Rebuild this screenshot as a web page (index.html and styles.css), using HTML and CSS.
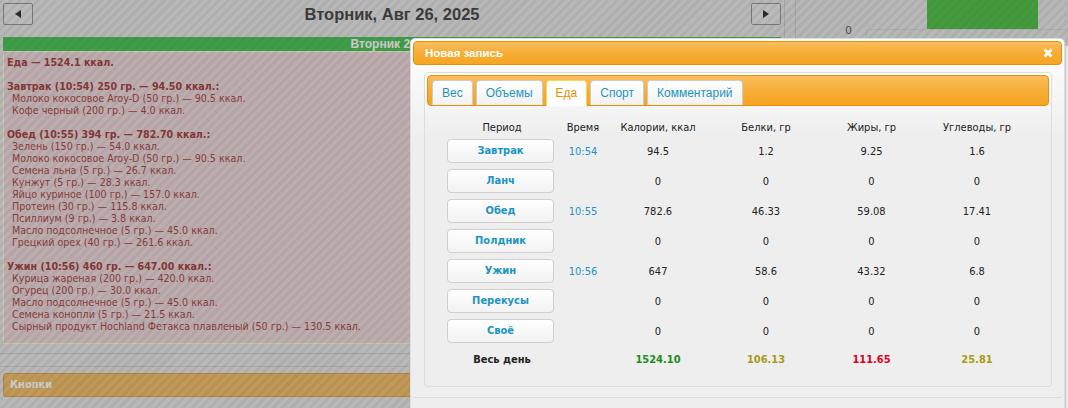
FILE: index.html
```html
<!DOCTYPE html>
<html lang="ru">
<head>
<meta charset="utf-8">
<title>Дневник</title>
<link rel="stylesheet" href="styles.css">
</head>
<body>
<div class="page">
  <div class="left">
    <div class="nav">
      <div class="navbtn"><svg width="8" height="8" viewBox="0 0 8 8"><polygon points="7,0 7,8 1,4" fill="#222"/></svg></div>
      <div class="title">Вторник, Авг 26, 2025</div>
      <div class="navbtn"><svg width="8" height="8" viewBox="0 0 8 8"><polygon points="1,0 1,8 7,4" fill="#222"/></svg></div>
    </div>
    <div class="day">
      <div class="day-head">Вторник 26.08</div>
      <div class="day-body">
        <div class="ln hd">Еда — 1524.1 ккал.</div>
        <div class="ln"></div>
        <div class="ln hd">Завтрак (10:54) 250 гр. — 94.50 ккал.:</div>
        <div class="ln it">Молоко кокосовое Aroy-D (50 гр.) — 90.5 ккал.</div>
        <div class="ln it">Кофе черный (200 гр.) — 4.0 ккал.</div>
        <div class="ln"></div>
        <div class="ln hd">Обед (10:55) 394 гр. — 782.70 ккал.:</div>
        <div class="ln it">Зелень (150 гр.) — 54.0 ккал.</div>
        <div class="ln it">Молоко кокосовое Aroy-D (50 гр.) — 90.5 ккал.</div>
        <div class="ln it">Семена льна (5 гр.) — 26.7 ккал.</div>
        <div class="ln it">Кунжут (5 гр.) — 28.3 ккал.</div>
        <div class="ln it">Яйцо куриное (100 гр.) — 157.0 ккал.</div>
        <div class="ln it">Протеин (30 гр.) — 115.8 ккал.</div>
        <div class="ln it">Псиллиум (9 гр.) — 3.8 ккал.</div>
        <div class="ln it">Масло подсолнечное (5 гр.) — 45.0 ккал.</div>
        <div class="ln it">Грецкий орех (40 гр.) — 261.6 ккал.</div>
        <div class="ln"></div>
        <div class="ln hd">Ужин (10:56) 460 гр. — 647.00 ккал.:</div>
        <div class="ln it">Курица жареная (200 гр.) — 420.0 ккал.</div>
        <div class="ln it">Огурец (200 гр.) — 30.0 ккал.</div>
        <div class="ln it">Масло подсолнечное (5 гр.) — 45.0 ккал.</div>
        <div class="ln it">Семена конопли (5 гр.) — 21.5 ккал.</div>
        <div class="ln it">Сырный продукт Hochland Фетакса плавленый (50 гр.) — 130.5 ккал.</div>
      </div>
    </div>
    <div class="sep"></div>
    <div class="btnbar">Кнопки</div>
  </div>
  <div class="right">
    <div class="chart">
      <div class="bar"></div>
      <div class="axis-label">0</div>
      <div class="plot"></div>
    </div>
  </div>
</div>

<div class="overlay"></div>

<div class="dialog">
  <div class="dlg-title">
    <span>Новая запись</span>
    <svg class="close" width="10" height="10" viewBox="0 0 10 10"><path d="M1.5 1.5 L8.5 8.5 M8.5 1.5 L1.5 8.5" stroke="#fff" stroke-width="2.6"/></svg>
  </div>
  <div class="dlg-content">
    <div class="tabs">
      <div class="tabnav">
        <div class="tab">Вес</div>
        <div class="tab">Объемы</div>
        <div class="tab active">Еда</div>
        <div class="tab">Спорт</div>
        <div class="tab">Комментарий</div>
      </div>
      <div class="panel">
        <div class="grid head">
          <div>Период</div><div>Время</div><div>Калории, ккал</div><div>Белки, гр</div><div>Жиры, гр</div><div>Углеводы, гр</div>
        </div>
        <div class="rows">
          <div class="grid row"><div class="pbtn">Завтрак</div><div class="time">10:54</div><div>94.5</div><div>1.2</div><div>9.25</div><div>1.6</div></div>
          <div class="grid row"><div class="pbtn">Ланч</div><div class="time"></div><div>0</div><div>0</div><div>0</div><div>0</div></div>
          <div class="grid row"><div class="pbtn">Обед</div><div class="time">10:55</div><div>782.6</div><div>46.33</div><div>59.08</div><div>17.41</div></div>
          <div class="grid row"><div class="pbtn">Полдник</div><div class="time"></div><div>0</div><div>0</div><div>0</div><div>0</div></div>
          <div class="grid row"><div class="pbtn">Ужин</div><div class="time">10:56</div><div>647</div><div>58.6</div><div>43.32</div><div>6.8</div></div>
          <div class="grid row"><div class="pbtn">Перекусы</div><div class="time"></div><div>0</div><div>0</div><div>0</div><div>0</div></div>
          <div class="grid row"><div class="pbtn">Своё</div><div class="time"></div><div>0</div><div>0</div><div>0</div><div>0</div></div>
          <div class="grid total"><div class="tl">Весь день</div><div></div><div class="g">1524.10</div><div class="o">106.13</div><div class="r">111.65</div><div class="o">25.81</div></div>
        </div>
      </div>
    </div>
  </div>
  <div class="btnpane"></div>
</div>
<div class="edge"></div>
</body>
</html>
```

FILE: styles.css
```css
html, body {
  margin: 0;
  padding: 0;
}
body {
  width: 1068px;
  height: 408px;
  overflow: hidden;
  background: #e3e3e3;
  font-family: "DejaVu Sans", sans-serif;
  position: relative;
}

/* ---------- background page ---------- */
.page {
  display: flex;
  height: 408px;
}
.left {
  width: 785px;
  box-sizing: border-box;
  border-right: 1px solid #cbcbcb;
  padding: 3px 3px 0 3px;
}
.nav {
  display: flex;
  align-items: center;
  justify-content: space-between;
  height: 22px;
}
.navbtn {
  width: 30px;
  height: 22px;
  box-sizing: border-box;
  border: 1px solid #8e8e8e;
  border-radius: 2px;
  background: #e6e6e6;
  display: flex;
  align-items: center;
  justify-content: center;
}
.title {
  font-family: "Liberation Sans", Arial, sans-serif;
  font-weight: bold;
  font-size: 16.5px;
  color: #3a3a3a;
}
.day {
  margin-top: 12px;
}
.day-head {
  height: 14px;
  background: #3fbf4c;
  color: #fff;
  font-family: "Liberation Sans", Arial, sans-serif;
  font-weight: bold;
  font-size: 12px;
  line-height: 14px;
  text-align: center;
}
.day-body {
  background: #ebd4d6;
  border: 1px solid #fbfad0;
  height: 293px;
  box-sizing: border-box;
  padding: 4px 3px 0 3px;
  color: #a23c3c;
  font-family: "DejaVu Sans", sans-serif;
  font-stretch: condensed;
  font-size: 10.6px;
}
.ln {
  height: 12px;
  line-height: 12px;
  white-space: nowrap;
}
.ln.hd {
  font-weight: bold;
  color: #9e3434;
}
.ln.it {
  padding-left: 5px;
}
.sep {
  margin: 9px -3px 0;
  height: 12px;
  border-top: 1px solid #c9c9c9;
  border-bottom: 1px solid #cfcfcf;
}
.btnbar {
  margin-top: 6px;
  height: 24px;
  box-sizing: border-box;
  border: 1px solid #dd9c3c;
  border-radius: 3px;
  background: #f0b95f;
  color: #fff;
  font-family: "DejaVu Sans", sans-serif;
  font-stretch: condensed;
  font-weight: bold;
  font-size: 11px;
  line-height: 22px;
  padding-left: 6px;
}
.right {
  margin-left: 10px;
  flex: 1;
  border-left: 1px solid #cbcbcb;
}
.chart {
  position: relative;
  height: 408px;
}
.bar {
  position: absolute;
  left: 131px;
  top: 0;
  width: 111px;
  height: 29px;
  background: #47bd3d;
}
.axis-label {
  position: absolute;
  left: 49px;
  top: 24px;
  font-family: "DejaVu Sans", sans-serif;
  font-size: 11px;
  color: #555;
}
.plot {
  position: absolute;
  left: 70px;
  top: 29px;
  right: -10px;
  height: 400px;
  border: 1px solid #d4d4e0;
}

/* ---------- overlay ---------- */
.overlay {
  position: absolute;
  inset: 0;
  background: repeating-linear-gradient(135deg,
    rgba(60, 60, 60, 0.31) 0 3.2px,
    rgba(60, 60, 60, 0.26) 3.2px 6.4px);
}

/* ---------- dialog ---------- */
.dialog {
  position: absolute;
  left: 410px;
  top: 38px;
  width: 655px;
  height: 400px;
  box-sizing: border-box;
  border: 1px solid #dedede;
  border-radius: 5px;
  padding: 2px;
  background: linear-gradient(#ffffff, #eeeeee 100px);
  font-family: "DejaVu Sans", sans-serif;
  font-stretch: condensed;
  font-size: 11px;
}
.edge {
  position: absolute;
  left: 1065px;
  top: 46px;
  right: 0;
  bottom: 0;
  border-left: 1px solid #c6c6c6;
  background: #e9e9e9;
}
.dlg-title {
  height: 24px;
  box-sizing: border-box;
  border: 1px solid #e78f08;
  border-radius: 4px;
  background: linear-gradient(#f8bd5c, #f6aa30 60%, #f5a623);
  color: #fff;
  font-family: "Liberation Sans", Arial, sans-serif;
  font-weight: bold;
  font-size: 11.5px;
  display: flex;
  align-items: center;
  justify-content: space-between;
  padding: 0 8px 0 11px;
}
.close {
  display: block;
}
.dlg-content {
  padding: 7px 10px 0 11px;
}
.tabs {
  height: 315px;
  box-sizing: border-box;
  border: 1px solid #dddddd;
  border-radius: 4px;
  padding: 2px;
  background: linear-gradient(#ffffff, #eeeeee 60px);
}
.tabnav {
  height: 31px;
  box-sizing: border-box;
  border: 1px solid #e78f08;
  border-radius: 4px;
  background: linear-gradient(#f8be5e, #f6aa30 60%, #f5a525);
  padding: 4px 4px 0;
  display: flex;
  align-items: flex-start;
}
.tab {
  height: 25px;
  box-sizing: border-box;
  border: 1px solid #cccccc;
  border-bottom: 0;
  border-radius: 4px 4px 0 0;
  background: linear-gradient(#ffffff, #f1f1f1);
  color: #1c94c4;
  font-family: "Liberation Sans", Arial, sans-serif;
  font-size: 12px;
  line-height: 25px;
  padding: 0 9px;
  margin-right: 3px;
}
.tab.active {
  height: 26px;
  background: #ffffff;
  border-color: #fbd850;
  color: #eb8f00;
  position: relative;
}
.panel {
  padding: 9px 0 0 15px;
}
.grid {
  display: grid;
  grid-template-columns: 120px 42px 108px 108px 103px 108px;
  align-items: center;
  justify-items: center;
  color: #222;
}
.head {
  height: 24px;
}
.rows {
  display: flex;
  flex-direction: column;
  gap: 6px;
}
.row {
  height: 24px;
}
.pbtn {
  justify-self: start;
  margin-left: 5px;
  width: 107px;
  height: 24px;
  box-sizing: border-box;
  border: 1px solid #cfcfcf;
  border-radius: 4px;
  background: linear-gradient(#ffffff, #f2f2f2);
  color: #1c94c4;
  font-weight: bold;
  text-align: center;
  line-height: 22px;
}
.time {
  color: #1c94c4;
}
.total {
  height: 20px;
  font-weight: bold;
}
.total .tl { color: #222; }
.total .g { color: #1b8d1b; }
.total .o { color: #a59d12; }
.total .r { color: #e2001a; }
.btnpane {
  margin-top: 10px;
  border-top: 1px solid #dddddd;
  height: 40px;
}
```
